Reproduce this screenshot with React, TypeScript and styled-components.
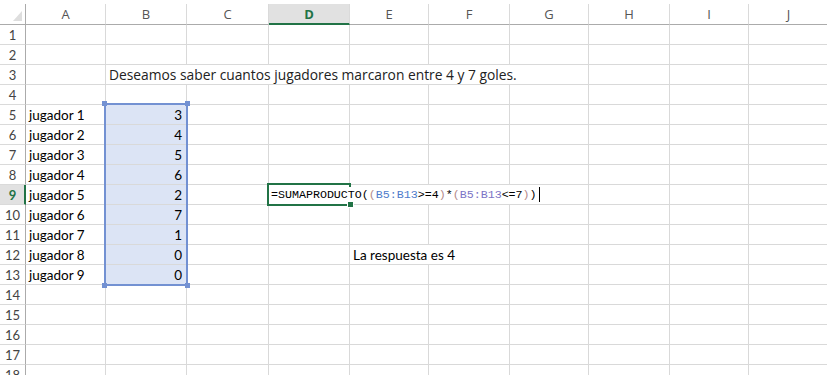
import React from 'react';
import styled, { createGlobalStyle, css } from 'styled-components';

const GlobalStyle = createGlobalStyle`
  html, body { margin: 0; padding: 0; background: #ffffff; overflow: hidden; }
  body { font-family: Lato, "Open Sans", sans-serif; }
`;

const COLS = [80, 81, 82, 81, 79, 81, 79, 81, 79, 80];
const LETTERS = 'ABCDEFGHIJ'.split('');
const GREEN = '#217346';
const SEL = '#7391d2';

const Sheet = styled.div`
  position: relative;
  width: 827px;
  height: 375px;
  padding-top: 4px;
  box-sizing: border-box;
  overflow: hidden;
  background: #fff;
`;

const Grid = styled.div`
  display: grid;
  grid-template-columns: 26px ${COLS.map((c) => c + 'px').join(' ')};
  grid-template-rows: 21px repeat(18, 20px);
`;

const Corner = styled.div`
  position: relative;
  border-right: 1px solid #ababab;
  border-bottom: 1px solid #ababab;
  &::after {
    content: '';
    position: absolute;
    right: 3px;
    bottom: 3px;
    width: 9px;
    height: 10px;
    background: #dedede;
    clip-path: polygon(100% 0, 100% 100%, 0 100%);
  }
`;

const ColHead = styled.div<{ $active?: boolean }>`
  display: flex;
  align-items: center;
  justify-content: center;
  font-family: 'Open Sans', sans-serif;
  font-size: 13px;
  color: #555;
  border-right: 1px solid #dadada;
  border-bottom: 1px solid #ababab;
  ${(p) =>
    p.$active &&
    css`
      background: #e1e1e1;
      color: ${GREEN};
      font-weight: 700;
      border-bottom: 2px solid ${GREEN};
      padding-top: 1px;
    `}
`;

const RowHead = styled.div<{ $active?: boolean }>`
  display: flex;
  align-items: center;
  justify-content: center;
  font-size: 13px;
  color: #444;
  border-right: 1px solid #ababab;
  border-bottom: 1px solid #dadada;
  ${(p) =>
    p.$active &&
    css`
      background: #e1e1e1;
      color: ${GREEN};
      font-weight: 700;
      border-right: 2px solid ${GREEN};
      padding-left: 1px;
    `}
`;

const Cell = styled.div<{ $span?: number; $right?: boolean; $selected?: boolean; $mono?: boolean; $wide?: boolean }>`
  grid-column: span ${(p) => p.$span ?? 1};
  display: flex;
  align-items: center;
  justify-content: ${(p) => (p.$right ? 'flex-end' : 'flex-start')};
  padding: 0 ${(p) => (p.$right ? '4px' : '0')} 0 ${(p) => (p.$mono ? '2px' : '3px')};
  font-size: 13.5px;
  color: #000;
  white-space: nowrap;
  overflow: visible;
  border-right: 1px solid #d9d9d9;
  border-bottom: 1px solid #d9d9d9;
  background: ${(p) => (p.$selected ? '#dce4f5' : 'transparent')};
  box-sizing: border-box;
  ${(p) =>
    p.$wide &&
    css`
      font-family: 'Open Sans', sans-serif;
      font-size: 13.8px;
      color: #222;
    `}
  ${(p) =>
    p.$mono &&
    css`
      font-family: 'Liberation Mono', 'DejaVu Sans Mono', monospace;
      font-size: 11.65px;
    `}
`;

const Ref = styled.span<{ $c: string }>`
  color: ${(p) => p.$c};
`;

const Caret = styled.span`
  display: inline-block;
  width: 1px;
  height: 15px;
  background: #000;
  margin-left: 2px;
`;

const Selection = styled.div`
  position: absolute;
  left: 104px;
  top: 103px;
  width: 84px;
  height: 183px;
  box-sizing: border-box;
  border: 2px solid ${SEL};
  pointer-events: none;
`;

const Handle = styled.div<{ $x: 'l' | 'r'; $y: 't' | 'b' }>`
  position: absolute;
  width: 5px;
  height: 5px;
  background: ${SEL};
  ${(p) => (p.$x === 'l' ? 'left: -4px;' : 'right: -4px;')}
  ${(p) => (p.$y === 't' ? 'top: -4px;' : 'bottom: -4px;')}
`;

const Active = styled.div`
  position: absolute;
  left: 267px;
  top: 183px;
  width: 83px;
  height: 23px;
  box-sizing: border-box;
  border: 2px solid ${GREEN};
  border-right: none;
  pointer-events: none;
  &::before {
    content: '';
    position: absolute;
    right: -1px;
    top: -2px;
    width: 2px;
    height: 4px;
    background: ${GREEN};
  }
`;

const FillHandle = styled.div`
  position: absolute;
  right: -4px;
  bottom: -4px;
  width: 5px;
  height: 5px;
  background: ${GREEN};
  border: 1px solid #fff;
`;

const scores = [3, 4, 5, 6, 2, 7, 1, 0, 0];

type CellDef = { span?: number; right?: boolean; selected?: boolean; mono?: boolean; wide?: boolean; content?: React.ReactNode };

const Formula = () => (
  <>
    =SUMAPRODUCTO(
    <Ref $c="#b58a8a">(</Ref>
    <Ref $c="#4e7ccb">B5:B13</Ref>&gt;=4<Ref $c="#b58a8a">)</Ref>*
    <Ref $c="#b58a8a">(</Ref>
    <Ref $c="#7b74c6">B5:B13</Ref>&lt;=7<Ref $c="#b58a8a">)</Ref>)
    <Caret />
  </>
);

function rowCells(r: number): CellDef[] {
  const cells: CellDef[] = [];
  const isPlayer = r >= 5 && r <= 13;
  cells.push({ content: isPlayer ? `jugador ${r - 4}` : undefined });
  if (r === 3) {
    cells.push({ span: 6, wide: true, content: 'Deseamos saber cuantos jugadores marcaron entre 4 y 7 goles.' });
    cells.push({}, {}, {});
    return cells;
  }
  cells.push(isPlayer ? { right: true, selected: true, content: scores[r - 5] } : {});
  cells.push({});
  if (r === 9) {
    cells.push({ span: 4, mono: true, content: <Formula /> });
    cells.push({}, {}, {});
    return cells;
  }
  cells.push({});
  if (r === 12) {
    cells.push({ span: 2, content: 'La respuesta es 4' });
    cells.push({}, {}, {}, {});
    return cells;
  }
  for (let i = 0; i < 6; i++) cells.push({});
  return cells;
}

export default function App() {
  const rows = Array.from({ length: 18 }, (_, i) => i + 1);
  return (
    <>
      <GlobalStyle />
      <Sheet>
        <Grid>
          <Corner />
          {LETTERS.map((l) => (
            <ColHead key={l} $active={l === 'D'}>
              {l}
            </ColHead>
          ))}
          {rows.map((r) => (
            <React.Fragment key={r}>
              <RowHead $active={r === 9}>{r}</RowHead>
              {rowCells(r).map((c, i) => (
                <Cell key={i} $span={c.span} $right={c.right} $selected={c.selected} $mono={c.mono} $wide={c.wide}>
                  {c.content}
                </Cell>
              ))}
            </React.Fragment>
          ))}
        </Grid>
        <Selection>
          <Handle $x="l" $y="t" />
          <Handle $x="r" $y="t" />
          <Handle $x="l" $y="b" />
          <Handle $x="r" $y="b" />
        </Selection>
        <Active>
          <FillHandle />
        </Active>
      </Sheet>
    </>
  );
}
